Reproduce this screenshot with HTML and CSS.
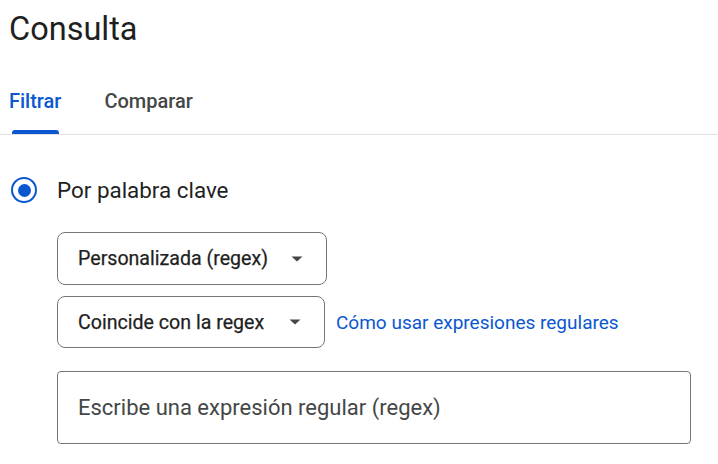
FILE: index.html
```html
<!DOCTYPE html>
<html lang="es">
<head>
<meta charset="utf-8">
<link rel="stylesheet" href="styles.css">
</head>
<body>
<div class="page">
  <h1 class="title">Consulta</h1>
  <div class="tabs">
    <div class="tab active">Filtrar<span class="indicator"></span></div>
    <div class="tab">Comparar</div>
  </div>
  <div class="content">
    <div class="option">
      <span class="radio"><span class="dot"></span></span>
      <span class="option-label">Por palabra clave</span>
    </div>
    <div class="fields">
      <div class="select s1">
        <span class="select-text">Personalizada (regex)</span>
        <svg class="arrow" width="12" height="6" viewBox="0 0 12 6"><path d="M0.5 0.5 L11.5 0.5 L6 5.5 Z" fill="#444746"/></svg>
      </div>
      <div class="row">
        <div class="select s2">
          <span class="select-text">Coincide con la regex</span>
          <svg class="arrow" width="12" height="6" viewBox="0 0 12 6"><path d="M0.5 0.5 L11.5 0.5 L6 5.5 Z" fill="#444746"/></svg>
        </div>
        <a class="link" href="#">Cómo usar expresiones regulares</a>
      </div>
      <div class="input">Escribe una expresión regular (regex)</div>
    </div>
  </div>
</div>
</body>
</html>
```

FILE: styles.css
```css
html, body {
  margin: 0;
  padding: 0;
  background: #ffffff;
}
body {
  font-family: Roboto, "Liberation Sans", sans-serif;
  color: #1f1f1f;
}
.page {
  width: 718px;
}
.title {
  margin: 0;
  padding: 9px 0 0 9px;
  font-size: 32.5px;
  font-weight: 400;
  line-height: 40px;
  color: #1f1f1f;
}
.tabs {
  display: flex;
  gap: 43px;
  padding: 0 0 0 9px;
  height: 86px;
  border-bottom: 1px solid #e3e3e3;
  align-items: flex-end;
  box-sizing: border-box;
}
.tab {
  position: relative;
  font-size: 20px;
  font-weight: 500;
  color: #444746;
  line-height: 24px;
  padding-bottom: 21px;
}
.tab.active {
  color: #0b57d0;
}
.indicator {
  position: absolute;
  left: 3px;
  right: 2px;
  bottom: 0;
  height: 4px;
  background: #0b57d0;
  border-radius: 3px 3px 0 0;
}
.content {
  padding: 42px 0 0 11px;
}
.option {
  display: flex;
  align-items: center;
  gap: 20px;
}
.radio {
  width: 26px;
  height: 26px;
  box-sizing: border-box;
  border: 2.5px solid #0b57d0;
  border-radius: 50%;
  display: flex;
  align-items: center;
  justify-content: center;
}
.dot {
  width: 13px;
  height: 13px;
  border-radius: 50%;
  background: #0b57d0;
}
.option-label {
  font-size: 22.4px;
  color: #1f1f1f;
}
.fields {
  padding: 28px 0 0 46px;
  display: flex;
  flex-direction: column;
  gap: 11px;
}
.select {
  display: flex;
  align-items: center;
  justify-content: space-between;
  height: 53px;
  box-sizing: border-box;
  border: 1px solid #747775;
  border-radius: 8px;
  padding: 0 23px 0 20px;
}
.s1 { width: 270px; margin-top: 1px; }
.s2 { width: 268px; height: 52px; }
.select-text {
  font-size: 19.6px;
  font-weight: 400;
  color: #1f1f1f;
  -webkit-text-stroke: 0.25px #1f1f1f;
}
.arrow { display: block; }
.row {
  display: flex;
  align-items: center;
  gap: 11px;
}
.link {
  font-size: 19px;
  color: #0b57d0;
  text-decoration: none;
}
.input {
  margin-top: 12px;
  width: 634px;
  height: 73px;
  box-sizing: border-box;
  border: 1px solid #747775;
  border-radius: 4px;
  padding: 0 20px;
  display: flex;
  align-items: center;
  font-size: 22px;
  color: #444746;
}
```
